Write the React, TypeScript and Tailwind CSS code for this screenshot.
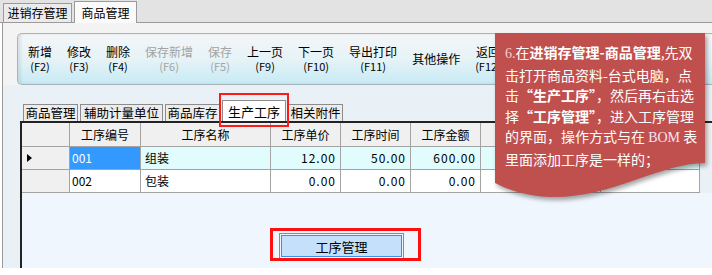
import React from 'react';

const TOOLBAR = [
  { t: '新增', k: '(F2)' },
  { t: '修改', k: '(F3)' },
  { t: '删除', k: '(F4)' },
  { t: '保存新增', k: '(F6)', off: true },
  { t: '保存', k: '(F5)', off: true },
  { t: '上一页', k: '(F9)' },
  { t: '下一页', k: '(F10)' },
  { t: '导出打印', k: '(F11)' },
  { t: '其他操作', k: '' },
  { t: '返回', k: '(F12)' },
];

const TABS = [
  { t: '商品管理', w: 'w-[55px]' },
  { t: '辅助计量单位', w: 'w-[83px]' },
  { t: '商品库存', w: 'w-[55px]' },
  { t: '生产工序', w: 'w-[64px]', on: true },
  { t: '相关附件', w: 'w-[55px]' },
];

const COLS = ['', '工序编号', '工序名称', '工序单价', '工序时间', '工序金额', '', ''];
const ROWS = [
  { no: '001', name: '组装', price: '12.00', time: '50.00', amt: '600.00' },
  { no: '002', name: '包装', price: '0.00', time: '0.00', amt: '0.00' },
];

const gridCols = 'grid grid-cols-[48px_71px_130px_70px_70px_70px_120px_99px]';

export default function App() {
  return (
    <div className="relative w-[712px] h-[275px] overflow-hidden bg-white font-['Noto_Sans_CJK_SC',sans-serif] text-[12px] text-black">
      {/* top module tabs */}
      <div className="flex items-end h-[23px] pl-[3px] bg-[#e3e3e3] border-b border-[#9a9a9a]">
        <div className="h-[19px] w-[69px] flex items-center justify-center border border-b-0 border-[#9a9a9a] bg-[#ebebeb] leading-none">
          进销存管理
        </div>
        <div className="h-[22px] w-[63px] ml-[2px] -mb-px flex items-center justify-center border border-b-0 border-[#9a9a9a] bg-[#fafafa] leading-none">
          商品管理
        </div>
      </div>

      {/* body */}
      <div className="ml-[2px] h-[245px] border-l border-[#9a9a9a] bg-[#eaf1f6] flex flex-col">
        <div className="bg-[#f3f3f3] pt-[10px] pl-[14px]">
          <div className="h-[52px] rounded-l-[5px] border border-r-0 border-[#a9b3ba] bg-linear-to-b from-[#f4f6f7] via-[#e6f3f7] to-[#c7eaf5] flex items-center gap-[15px] pl-[10px] shadow-[inset_3px_0_3px_rgba(0,0,0,0.08)]">
            {TOOLBAR.map((b, i) => (
              <div
                key={i}
                className={`flex flex-col items-center whitespace-nowrap leading-[14px] ${b.off ? 'text-[#a3a3a3]' : 'text-black'}`}
              >
                <span>{b.t}</span>
                {b.k && <span className="text-[11px]">{b.k}</span>}
              </div>
            ))}
          </div>
        </div>

        {/* inner tabs */}
        <div className="flex items-end h-[36px] pl-[18px]">
          {TABS.map((t) =>
            t.on ? (
              <div key={t.t} className={`relative h-[21px] ${t.w} ml-[2px] flex items-center justify-center border border-b-0 border-[#8c8c8c] bg-white leading-none text-[13px]`}>
                {t.t}
                <div className="absolute left-[-4px] top-[-8px] w-[70px] h-[34px] border-2 border-[#ff1a1a]" />
              </div>
            ) : (
              <div key={t.t} className={`h-[17px] ${t.w} ml-[2px] flex items-center justify-center border border-b-0 border-[#8c8c8c] bg-[#ececec] leading-none text-[12.5px]`}>
                {t.t}
              </div>
            )
          )}
        </div>

        {/* grid */}
        <div className="ml-[17px] flex-1 border-l-2 border-t-2 border-[#222] flex flex-col">
          <div className={`${gridCols} h-[24px] bg-[#f0f0f0]`}>
            {COLS.map((c, i) => (
              <div key={i} className="border-r border-b border-[#a3a3a3] flex items-center justify-center">
                {c}
              </div>
            ))}
          </div>
          {ROWS.map((r, ri) => {
            const cell = `border-r border-b border-[#a3a3a3] flex items-center px-[4px] ${ri === 0 ? 'bg-[#e0fcfc]' : 'bg-white'}`;
            return (
              <div key={r.no} className={`${gridCols} h-[23px]`}>
                <div className="border-r border-b border-[#a3a3a3] bg-[#f0f0f0] flex items-center pl-[5px]">
                  {ri === 0 && (
                    <svg width="6" height="8" viewBox="0 0 6 8">
                      <path d="M0 0 L5 4 L0 8 Z" fill="#000" />
                    </svg>
                  )}
                </div>
                <div className={`border-r border-b border-[#a3a3a3] flex items-center px-[2px] ${ri === 0 ? 'bg-[#3399ff] text-white' : 'bg-white'}`}>
                  {r.no}
                </div>
                <div className={cell}>{r.name}</div>
                <div className={`${cell} justify-end tracking-[1px]`}>{r.price}</div>
                <div className={`${cell} justify-end tracking-[1px]`}>{r.time}</div>
                <div className={`${cell} justify-end tracking-[1px]`}>{r.amt}</div>
                <div className={cell} />
                <div className={cell} />
              </div>
            );
          })}

          <div className="flex-1 bg-[#eff6fd] pt-[40px] pl-[257px]">
            <div className="relative w-[125px] h-[26px] border border-[#8a8a8a] p-px">
              <div className="h-full border border-[#3d8fe3] bg-[#c5e0fb] flex items-center justify-center text-[13px] leading-none">
                工序管理
              </div>
              <div className="absolute left-[-10px] top-[-6px] w-[151px] h-[33px] border-[3px] border-[#ff1010]" />
            </div>
          </div>
        </div>
      </div>

      {/* callout */}
      <div className="absolute left-[495px] top-[33px] w-[212px] h-[170px]">
        <svg width="212" height="170" viewBox="0 0 212 170" className="absolute inset-0 drop-shadow-[2px_3px_2px_rgba(0,0,0,0.35)]">
          <path d="M0 0 H210 V130 C165 130 115 166 55 164 C30 163 12 156 0 150 Z" fill="#c0504d" />
        </svg>
        <div className="relative pt-[9px] pl-[10px] text-[14px] leading-[20.5px] text-white whitespace-nowrap">
          <div>
            <span className="text-[#f7d0cf] font-['Liberation_Serif',serif]">6.</span>在<b>进销存管理-商品管理</b>,先双
          </div>
          <div>击打开商品资料-台式电脑，点</div>
          <div>
            击<b>“生产工序”</b>，然后再右击选
          </div>
          <div>
            择<b>“工序管理”</b>，进入工序管理
          </div>
          <div>
            的界面，操作方式与在 <span className="font-['Liberation_Serif',serif] text-[#f3e4f5]">BOM</span> 表
          </div>
          <div>里面添加工序是一样的；</div>
        </div>
      </div>
    </div>
  );
}
